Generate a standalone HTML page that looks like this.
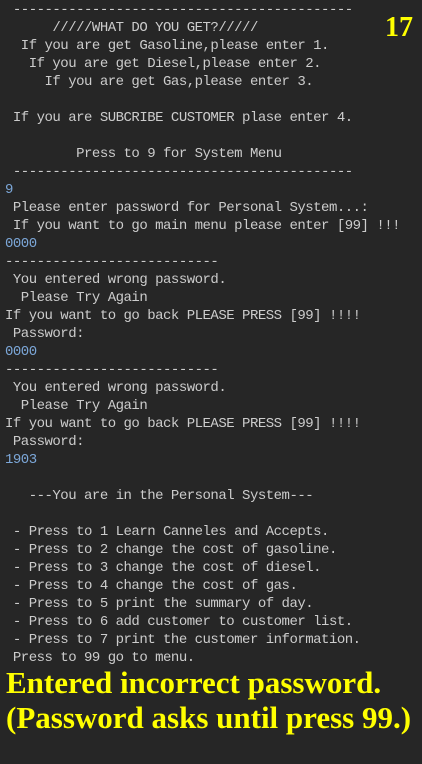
<!DOCTYPE html>
<html><head><meta charset="utf-8"><style>
html,body{margin:0;padding:0;background:#262626;width:422px;height:764px;overflow:hidden;position:relative}
pre{margin:0;position:absolute;left:5px;top:1px;font-family:"Liberation Mono",monospace;font-size:14px;letter-spacing:-0.5px;line-height:18px;color:#cccccc;white-space:pre}
.b{color:#7ca7d8}
.y{position:absolute;font-family:"Liberation Serif",serif;font-weight:bold;color:#ffff00;white-space:nowrap}
</style></head><body>
<pre> -------------------------------------------
      /////WHAT DO YOU GET?/////
  If you are get Gasoline,please enter 1.
   If you are get Diesel,please enter 2.
     If you are get Gas,please enter 3.

 If you are SUBCRIBE CUSTOMER plase enter 4.

         Press to 9 for System Menu
 -------------------------------------------
<span class="b">9</span>
 Please enter password for Personal System...:
 If you want to go main menu please enter [99] !!!
<span class="b">0000</span>
---------------------------
 You entered wrong password.
  Please Try Again
If you want to go back PLEASE PRESS [99] !!!!
 Password:
<span class="b">0000</span>
---------------------------
 You entered wrong password.
  Please Try Again
If you want to go back PLEASE PRESS [99] !!!!
 Password:
<span class="b">1903</span>

   ---You are in the Personal System---

 - Press to 1 Learn Canneles and Accepts.
 - Press to 2 change the cost of gasoline.
 - Press to 3 change the cost of diesel.
 - Press to 4 change the cost of gas.
 - Press to 5 print the summary of day.
 - Press to 6 add customer to customer list.
 - Press to 7 print the customer information.
 Press to 99 go to menu.</pre>
<div class="y" style="left:385px;top:12px;font-size:28px;line-height:32px">17</div>
<div class="y" style="left:6px;top:665px;font-size:31px;line-height:35px">Entered incorrect password.<br>(Password asks until press 99.)</div>
</body></html>
